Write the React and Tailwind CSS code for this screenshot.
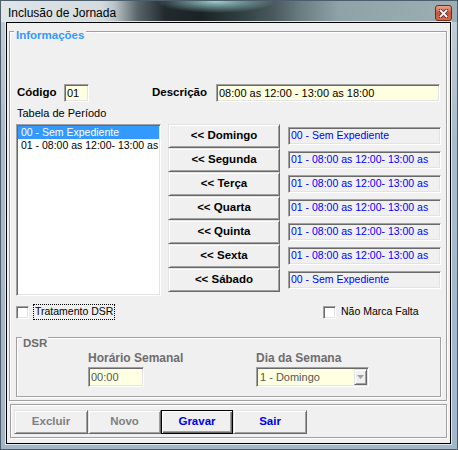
import React from 'react';

const sunken =
  'border border-t-[#a0a0a0] border-l-[#a0a0a0] border-b-white border-r-white shadow-[inset_1px_1px_0_#696969,inset_-1px_-1px_0_#e3e3e3]';
const raised =
  'border border-t-[#e3e3e3] border-l-[#e3e3e3] border-b-[#696969] border-r-[#696969] shadow-[inset_1px_1px_0_#ffffff,inset_-1px_-1px_0_#a0a0a0] bg-[#f0f0f0]';
const etched = 'border border-[#a0a0a0] shadow-[inset_1px_1px_0_#ffffff,1px_1px_0_#ffffff]';

const days = [
  ['Domingo', '00 - Sem Expediente'],
  ['Segunda', '01 - 08:00 as 12:00- 13:00 as'],
  ['Terça', '01 - 08:00 as 12:00- 13:00 as'],
  ['Quarta', '01 - 08:00 as 12:00- 13:00 as'],
  ['Quinta', '01 - 08:00 as 12:00- 13:00 as'],
  ['Sexta', '01 - 08:00 as 12:00- 13:00 as'],
  ['Sábado', '00 - Sem Expediente'],
];

const CloseButton = () => (
  <div className="mt-[4px] mr-[5px] flex h-[16px] w-[17px] items-center justify-center rounded-[3px] border border-[#6e2b1f] bg-[#d0604a] bg-linear-to-b from-[#eba48f] via-[#c9533a] to-[#d8694c]">
    <svg width="9" height="9" viewBox="0 0 9 9">
      <path d="M1.5 1.5 L7.5 7.5 M7.5 1.5 L1.5 7.5" stroke="#5a2a22" strokeWidth="3.4" strokeLinecap="square" />
      <path d="M1.5 1.5 L7.5 7.5 M7.5 1.5 L1.5 7.5" stroke="#ffffff" strokeWidth="1.8" strokeLinecap="square" />
    </svg>
  </div>
);

const Checkbox = () => <div className={`h-[13px] w-[13px] shrink-0 bg-white ${sunken}`} />;

export default function App() {
  return (
    <div className="flex h-[450px] w-[458px] flex-col border border-[#4d5d6b] bg-[linear-gradient(180deg,#c5d0d6_0%,#a9bccb_30%,#a2b6c8_100%)] font-['Liberation_Sans',Arial,sans-serif] text-[10.5px] text-black">
      {/* Title bar */}
      <div className="flex h-[21px] shrink-0 items-start justify-between bg-[radial-gradient(60px_12px_at_215px_0px,rgba(170,228,228,0.9),transparent),linear-gradient(90deg,#dfe5e8_0%,#d3dbdf_22%,#b9c3c7_25%,#58646a_30%,#222a2e_36%,#1b2225_44%,#2f3d40_52%,#4b5a5e_60%,#6b7f83_66%,#8ea3a7_74%,#9cb0b3_100%)]">
        <span className="pl-[7px] pt-[5px] text-[12px] leading-[14px] text-black">Inclusão de Jornada</span>
        <CloseButton />
      </div>

      {/* Client area */}
      <div className="ml-[5px] mr-[6px] flex h-[422px] flex-col border border-black bg-[#f0f0f0] shadow-[0_0_0_1px_#dfe8ef]">
        {/* Informações group */}
        <div className={`relative mt-[8px] ml-[2px] mr-[3px] h-[370px] ${etched}`}>
          <span className="absolute top-[-4px] left-[4px] bg-[#f0f0f0] px-[2px] text-[11.5px] font-bold leading-[14px] text-[#3399ff]">
            Informações
          </span>

          {/* Código / Descrição */}
          <div className="mt-[52px] flex h-[18px] items-center pl-[7px]">
            <span className="w-[47px] text-[11.5px] font-bold">Código</span>
            <div className={`flex h-[18px] w-[25px] items-center bg-[#ffffe1] pl-[2px] text-[11px] ${sunken}`}>01</div>
            <span className="ml-[63px] w-[64px] text-[11.5px] font-bold">Descrição</span>
            <div className={`flex h-[18px] w-[224px] items-center bg-[#ffffe1] pl-[2px] text-[11px] ${sunken}`}>
              08:00 as 12:00 - 13:00 as 18:00
            </div>
          </div>

          <div className="mt-[5px] h-[13px] pl-[7px] text-[11px] leading-[13px]">Tabela de Período</div>

          {/* List, day buttons, assigned periods */}
          <div className="mt-[4px] flex pl-[6px]">
            <div className={`h-[172px] w-[145px] overflow-hidden bg-white p-[1px] ${sunken}`}>
              <div className="h-[13px] whitespace-nowrap bg-[#3399ff] pl-[3px] leading-[13px] text-white">00 - Sem Expediente</div>
              <div className="h-[13px] whitespace-nowrap pl-[3px] leading-[13px]">01 - 08:00 as 12:00- 13:00 as</div>
            </div>

            <div className="ml-[7px] flex w-[112px] flex-col">
              {days.map(([day]) => (
                <div key={day} className={`flex h-[24px] items-center justify-center text-[11.5px] font-bold ${raised}`}>
                  {'<< ' + day}
                </div>
              ))}
            </div>

            <div className="ml-[8px] flex w-[153px] flex-col">
              {days.map(([day, value]) => (
                <div key={day} className="flex h-[24px] items-center">
                  <div className={`flex h-[18px] w-full items-center overflow-hidden whitespace-nowrap pl-[2px] text-[#0000ff] ${sunken}`}>
                    {value}
                  </div>
                </div>
              ))}
            </div>
          </div>

          {/* Checkboxes */}
          <div className="mt-[8px] flex h-[16px] items-center pl-[6px]">
            <Checkbox />
            <div className="ml-[4px] flex h-[16px] w-[82px] items-center whitespace-nowrap border border-dotted border-black pl-[1px]">
              Tratamento DSR
            </div>
            <div className="ml-[208px]">
              <Checkbox />
            </div>
            <span className="ml-[5px] whitespace-nowrap">Não Marca Falta</span>
          </div>

          {/* DSR group */}
          <div className={`relative mt-[17px] ml-[6px] h-[60px] w-[425px] ${etched}`}>
            <span className="absolute top-[-2px] left-[5px] bg-[#f0f0f0] px-[1px] text-[11.5px] font-bold leading-[14px] text-[#6d6d6d]">
              DSR
            </span>
            <div className="mt-[13px] flex pl-[71px]">
              <div className="flex w-[168px] flex-col">
                <span className="h-[14px] text-[12px] font-bold leading-[14px] text-[#6d6d6d]">Horário Semanal</span>
                <div className={`mt-[2px] flex h-[20px] w-[56px] items-center bg-[#ffffe1] pl-[2px] text-[11px] text-[#555555] ${sunken}`}>00:00</div>
              </div>
              <div className="flex w-[113px] flex-col">
                <span className="h-[14px] text-[12px] font-bold leading-[14px] text-[#6d6d6d]">Dia da Semana</span>
                <div className={`mt-[2px] flex h-[20px] w-[113px] items-center justify-between bg-[#ffffe1] pl-[3px] pr-[1px] text-[11px] text-[#555555] ${sunken}`}>
                  <span>1 - Domingo</span>
                  <div className={`flex h-[16px] w-[13px] items-center justify-center ${raised}`}>
                    <svg width="7" height="4" viewBox="0 0 7 4">
                      <path d="M0 0 H7 L3.5 4 Z" fill="#a0a0a0" />
                    </svg>
                  </div>
                </div>
              </div>
            </div>
          </div>
        </div>

        {/* Bottom button panel */}
        <div className={`mt-[3px] ml-[3px] mr-[3px] flex h-[34px] items-start pl-[3px] pt-[5px] ${etched}`}>
          <div className={`flex h-[24px] w-[74px] items-center justify-center text-[11.5px] font-bold text-[#7f7f7f] ${raised}`}>Excluir</div>
          <div className={`flex h-[24px] w-[73px] items-center justify-center text-[11.5px] font-bold text-[#7f7f7f] ${raised}`}>Novo</div>
          <div className="flex h-[24px] w-[72px] items-center justify-center border border-black bg-[#f0f0f0] text-[11.5px] font-bold text-[#0000f0] shadow-[inset_1px_1px_0_#ffffff,inset_-1px_-1px_0_#696969,inset_-2px_-2px_0_#a0a0a0]">
            Gravar
          </div>
          <div className={`flex h-[24px] w-[74px] items-center justify-center text-[11.5px] font-bold text-[#0000f0] ${raised}`}>Sair</div>
        </div>
      </div>
    </div>
  );
}
